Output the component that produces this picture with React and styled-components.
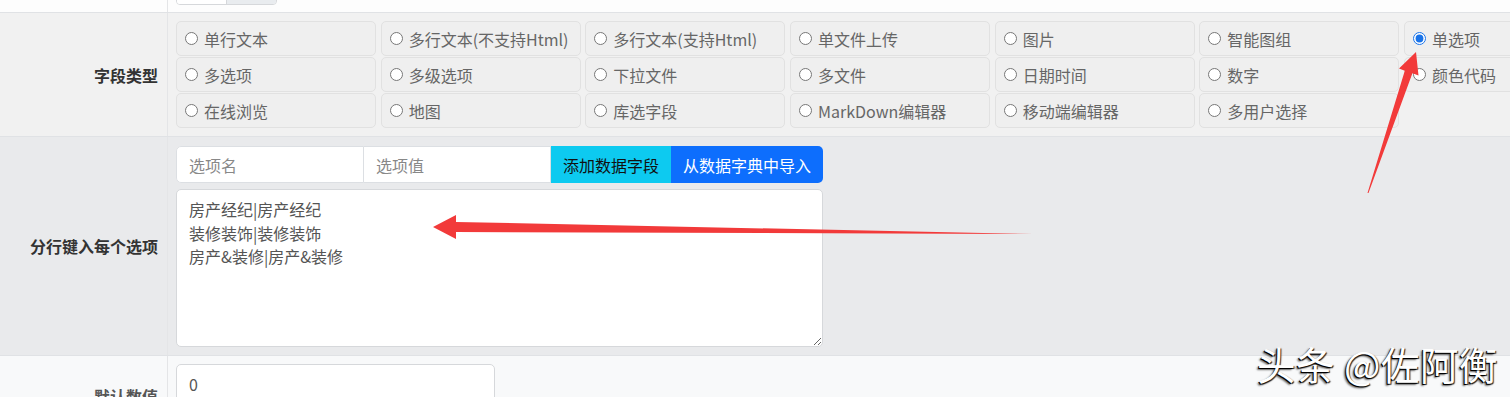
import styled, { createGlobalStyle } from "styled-components";

const GlobalStyle = createGlobalStyle`
  html, body {
    margin: 0;
    padding: 0;
    overflow: hidden;
    background: #fdfdfd;
  }
  body {
    font-family: "Noto Sans CJK SC", "Noto Sans", sans-serif;
    font-size: 16px;
    color: #333;
  }
`;

const Page = styled.div`
  position: relative;
  width: 1510px;
  height: 397px;
  overflow: hidden;
`;

const tones = {
  top: "#fdfdfd",
  type: "#f1f1f1",
  options: "#e9eaec",
  plain: "#f8f9fa",
};

const Row = styled.div`
  display: grid;
  grid-template-columns: 168px 1fr;
  background: ${({ tone }) => tones[tone]};
  border-bottom: 1px solid #e0e2e5;
  overflow: hidden;
  ${({ height }) => height && `height: ${height}px;`}
`;

const Label = styled.div`
  display: flex;
  align-items: center;
  justify-content: flex-end;
  padding-right: 9px;
  border-right: 1px solid #e4e5e7;
  font-weight: 700;
  font-size: 16px;
  color: ${({ muted }) => (muted ? "#555" : "#333")};
  line-height: 20px;
`;

const Cell = styled.div`
  padding: ${({ pad }) => pad || "8px 0 8px 8px"};
  display: flex;
  flex-direction: column;
  align-items: flex-start;
  gap: 6px;
`;

const CutGroup = styled.div`
  display: flex;
  width: 99px;
  height: 33px;
  margin-top: -30px;
  border: 1px solid #d6d8db;
  border-radius: 4px;
  overflow: hidden;
`;

const CutPart = styled.div`
  flex: 1;
  background: ${({ grey }) => (grey ? "#e9ecef" : "#fff")};
  border-left: ${({ grey }) => (grey ? "1px solid #d6d8db" : "none")};
`;

const RadioGrid = styled.div`
  display: grid;
  grid-template-columns: repeat(7, 200px);
  grid-auto-rows: 35px;
  column-gap: 4.67px;
  row-gap: 1px;
`;

const RadioBox = styled.label`
  display: flex;
  align-items: center;
  padding-left: 8px;
  background: #efefef;
  border: 1px solid #e1e1e1;
  border-radius: 5px;
  color: #666;
  font-size: 16px;
  white-space: nowrap;
  box-sizing: border-box;

  input {
    width: 13px;
    height: 13px;
    margin: 0 6px 0 0;
    accent-color: #1a73e8;
  }
`;

const InputGroup = styled.div`
  display: flex;
  width: 647px;
  height: 37px;
  border-radius: 5px;
  overflow: hidden;
`;

const TextInput = styled.input`
  flex: 1;
  min-width: 0;
  box-sizing: border-box;
  height: 100%;
  padding: 0 12px;
  border: 1px solid #dcdfe3;
  border-left-width: ${({ joined }) => (joined ? "0" : "1px")};
  border-radius: ${({ joined }) => (joined ? "0" : "5px 0 0 5px")};
  background: #fff;
  font: inherit;
  font-size: 16px;
  color: #333;
  outline: none;

  &::placeholder {
    color: #888;
  }
`;

const Button = styled.button`
  height: 100%;
  padding: 0 12px;
  border: none;
  font: inherit;
  font-size: 16px;
  white-space: nowrap;
  background: ${({ variant }) => (variant === "info" ? "#0dcaf0" : "#0d6efd")};
  color: ${({ variant }) => (variant === "info" ? "#111" : "#fff")};
`;

const TextArea = styled.textarea`
  width: 647px;
  height: 158px;
  box-sizing: border-box;
  padding: 8px 12px;
  border: 1px solid #d6d8db;
  border-radius: 5px;
  background: #fff;
  font: inherit;
  font-size: 16px;
  line-height: 23.5px;
  color: #555;
  outline: none;
`;

const NumberInput = styled.input`
  width: 319px;
  height: 40px;
  box-sizing: border-box;
  padding: 0 12px;
  border: 1px solid #d6d8db;
  border-radius: 5px;
  background: #fff;
  font: inherit;
  font-size: 16px;
  color: #555;
  outline: none;
`;

const Overlay = styled.svg`
  position: absolute;
  left: 0;
  top: 0;
  pointer-events: none;
`;

const Watermark = styled.div`
  position: absolute;
  right: 12px;
  bottom: 12px;
  font-size: 38.5px;
  line-height: 44px;
  color: #fff;
  letter-spacing: 0.5px;
  text-shadow: -1px 1px 0 #000, 1px 1px 1px #222, -2px 2px 2px rgba(0, 0, 0, 0.6);
`;

const types = [
  "单行文本", "多行文本(不支持Html)", "多行文本(支持Html)", "单文件上传", "图片", "智能图组", "单选项",
  "多选项", "多级选项", "下拉文件", "多文件", "日期时间", "数字", "颜色代码",
  "在线浏览", "地图", "库选字段", "MarkDown编辑器", "移动端编辑器", "多用户选择",
];

const options = "房产经纪|房产经纪\n装修装饰|装修装饰\n房产&装修|房产&装修";

export default function App() {
  return (
    <Page>
      <GlobalStyle />
      <Row tone="top" height={12}>
        <Label />
        <Cell pad="0 0 0 8px">
          <CutGroup>
            <CutPart />
            <CutPart grey />
          </CutGroup>
        </Cell>
      </Row>

      <Row tone="type">
        <Label>字段类型</Label>
        <Cell>
          <RadioGrid>
            {types.map((t) => (
              <RadioBox key={t}>
                <input type="radio" name="ftype" defaultChecked={t === "单选项"} />
                {t}
              </RadioBox>
            ))}
          </RadioGrid>
        </Cell>
      </Row>

      <Row tone="options">
        <Label>分行键入每个选项</Label>
        <Cell pad="9px 0 8px 8px">
          <InputGroup>
            <TextInput placeholder="选项名" />
            <TextInput placeholder="选项值" joined />
            <Button variant="info">添加数据字段</Button>
            <Button>从数据字典中导入</Button>
          </InputGroup>
          <TextArea defaultValue={options} />
        </Cell>
      </Row>

      <Row tone="plain" height={80}>
        <Label muted>默认数值</Label>
        <Cell pad="8px 0 0 8px">
          <NumberInput defaultValue="0" />
        </Cell>
      </Row>

      <Overlay width="1510" height="397" viewBox="0 0 1510 397">
        <polygon
          fill="#f23a3a"
          points="433,227 456,215 456,222 1033,234 456,232 456,239"
        />
        <polygon
          fill="#f23a3a"
          points="1416,52 1418.5,75.5 1412.4,73.3 1368.5,193 1367.5,193 1404.8,70.7 1399,68.5"
        />
      </Overlay>

      <Watermark>头条 @佐阿衡</Watermark>
    </Page>
  );
}
